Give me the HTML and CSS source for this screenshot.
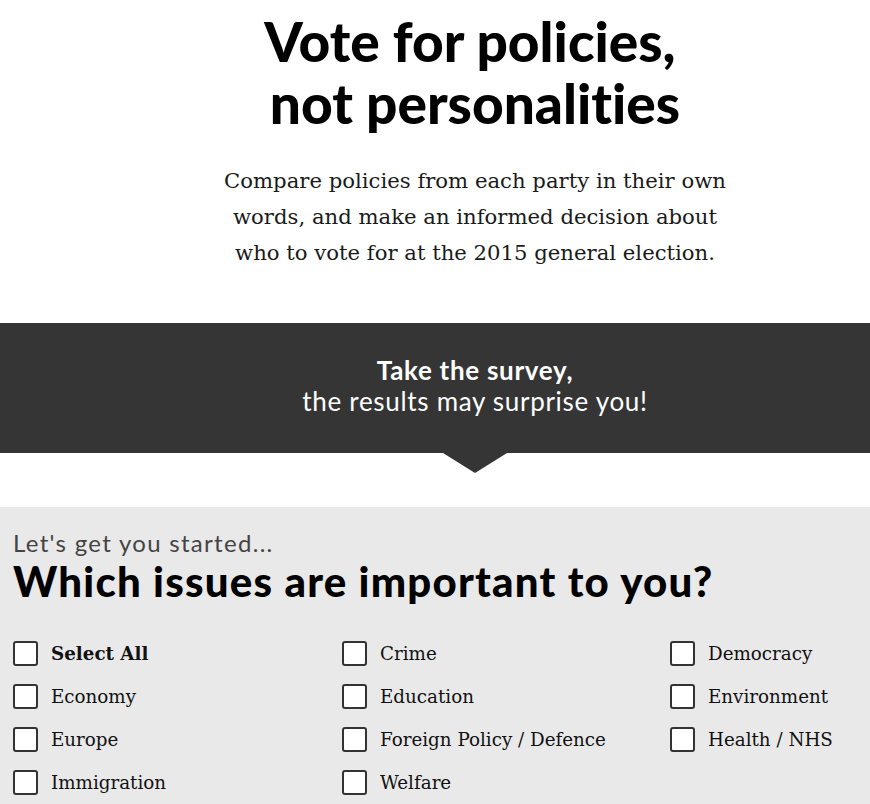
FILE: index.html
```html
<!DOCTYPE html>
<html lang="en">
<head>
<meta charset="utf-8">
<title>Vote for policies</title>
<link rel="stylesheet" href="styles.css">
</head>
<body>
<header class="hero">
  <h1 class="hero-title"><span class="hero-line hero-line-first">Vote for policies,</span><span class="hero-line">not personalities</span></h1>
  <p class="hero-text">Compare policies from each party in their own<br>words, and make an informed decision about<br>who to vote for at the 2015 general election.</p>
</header>

<section class="band">
  <p class="band-text"><strong>Take the survey,</strong><br>the results may surprise you!</p>
</section>

<section class="issues">
  <p class="issues-kicker">Let's get you started...</p>
  <h2 class="issues-title">Which issues are important to you?</h2>
  <div class="issues-grid">
    <label class="issue issue-all"><span class="box"></span>Select All</label>
    <label class="issue"><span class="box"></span>Crime</label>
    <label class="issue"><span class="box"></span>Democracy</label>
    <label class="issue"><span class="box"></span>Economy</label>
    <label class="issue"><span class="box"></span>Education</label>
    <label class="issue"><span class="box"></span>Environment</label>
    <label class="issue"><span class="box"></span>Europe</label>
    <label class="issue"><span class="box"></span>Foreign Policy / Defence</label>
    <label class="issue"><span class="box"></span>Health / NHS</label>
    <label class="issue"><span class="box"></span>Immigration</label>
    <label class="issue"><span class="box"></span>Welfare</label>
  </div>
</section>
</body>
</html>
```

FILE: styles.css
```css
html, body {
  margin: 0;
  padding: 0;
  overflow: hidden;
  background: #ffffff;
}

body {
  font-family: Lato, "Liberation Sans", sans-serif;
  font-variant-ligatures: none;
  color: #000;
}

.hero {
  padding: 10px 0 0 80px;
  text-align: center;
}

.hero-title {
  margin: 0;
  font-family: Lato, sans-serif;
  font-weight: 900;
  font-size: 55px;
  line-height: 62px;
  color: #000;
}

.hero-line {
  display: block;
}

.hero-line-first {
  padding-right: 10px;
}

.hero-text {
  margin: 29px 0 0 0;
  font-family: "DejaVu Serif", "Liberation Serif", serif;
  font-size: 21.2px;
  line-height: 36px;
  color: #1a1a1a;
}

.band {
  position: relative;
  margin-top: 52px;
  background: #353535;
  padding: 32px 0 36px 80px;
  text-align: center;
}

.band::after {
  content: "";
  position: absolute;
  left: 443px;
  top: 100%;
  border-left: 32px solid transparent;
  border-right: 32px solid transparent;
  border-top: 20px solid #353535;
}

.band-text {
  margin: 0;
  font-family: Lato, sans-serif;
  font-size: 26px;
  line-height: 31px;
  letter-spacing: 0.7px;
  color: #ffffff;
}

.band-text strong {
  font-weight: 700;
}

.issues {
  margin-top: 54px;
  background: #e9e9e9;
  padding: 22px 13px 40px 13px;
}

.issues-kicker {
  margin: 0;
  font-family: Lato, sans-serif;
  font-size: 24px;
  line-height: 28px;
  letter-spacing: 1.3px;
  color: #444444;
}

.issues-title {
  margin: 1px 0 0 0;
  font-family: Lato, sans-serif;
  font-weight: 900;
  font-size: 42px;
  line-height: 46px;
  letter-spacing: 1.2px;
  color: #000;
}

.issues-grid {
  margin-top: 37px;
  display: grid;
  grid-template-columns: 329px 328px 1fr;
  row-gap: 18px;
}

.issue {
  display: flex;
  align-items: center;
  gap: 13px;
  height: 25px;
  font-family: "DejaVu Serif", "Liberation Serif", serif;
  font-size: 18.3px;
  color: #111;
}

.issue-all {
  font-weight: 700;
}

.box {
  box-sizing: border-box;
  width: 25px;
  height: 25px;
  flex: none;
  background: #ffffff;
  border: 2px solid #333333;
  border-radius: 3px;
}
```
